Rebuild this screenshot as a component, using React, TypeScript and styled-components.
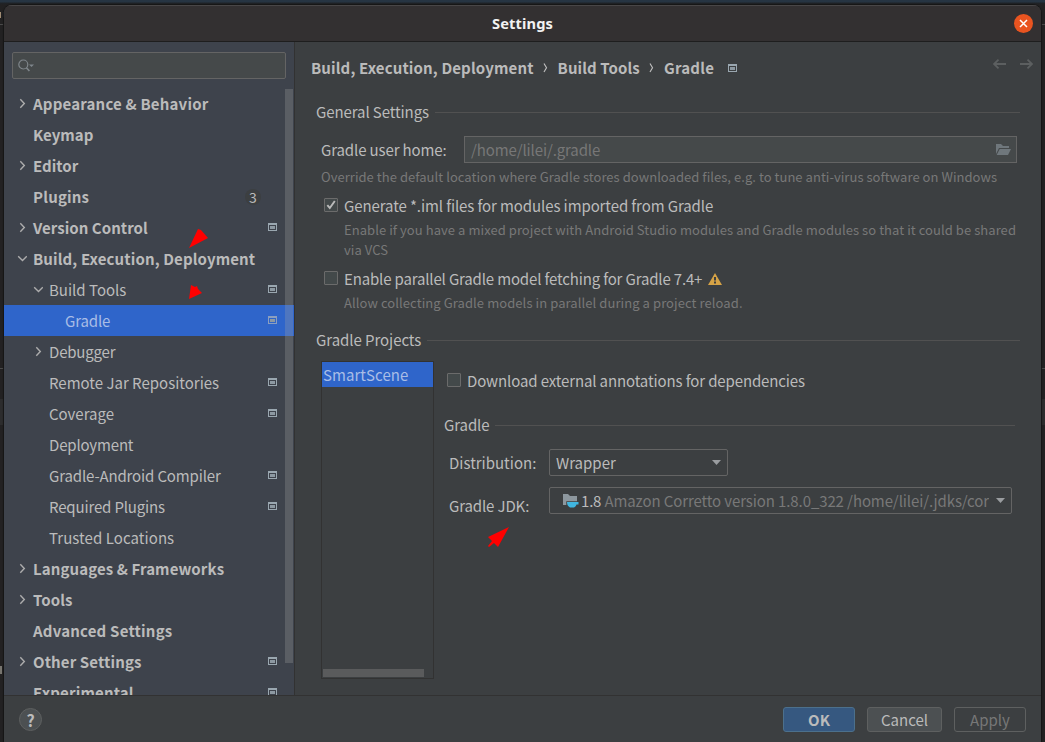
import React from "react";
import styled, { createGlobalStyle } from "styled-components";

const Global = createGlobalStyle`
  * { box-sizing: border-box; }
  html, body { margin: 0; height: 742px; overflow: hidden; background: #222122; }
  body { font-family: "Noto Sans CJK SC", sans-serif; font-size: 15px; line-height: 24px; color: #bbbbbb; }
  svg { display: block; flex: none; }
`;

const Desktop = styled.div`
  position: relative;
  width: 1045px; height: 742px; overflow: hidden;
  padding: 5px 4px 0 4px;
  background: linear-gradient(#263442 0 2px, #1f2327 3px, #222122 5px);
`;
const Backdrop = styled.svg` position: absolute; left: 0; top: 0; `;
const Dialog = styled.div`
  position: relative;
  display: flex; flex-direction: column;
  height: 737px; border-radius: 8px 8px 0 0; overflow: hidden;
  background: #3c3f41;
  box-shadow: 0 0 1px 1px #161616;
`;
const TitleBar = styled.header`
  display: grid; grid-template-columns: 40px 1fr 40px; align-items: center;
  height: 37px; flex: none; background: #333031;
  border-top: 1px solid #484647; border-bottom: 1px solid #1e1e1e;
`;
const Title = styled.h1`
  grid-column: 2; margin: -2px 0 0; text-align: center;
  font: 700 14.67px/24px "Noto Sans", sans-serif; letter-spacing: 0.12px; color: #f2f2f2;
`;
const CloseButton = styled.button`
  width: 19px; height: 19px; padding: 0; border: 0; border-radius: 50%;
  margin: -1px 0 0 12.5px; background: #e95420;
`;
const Body = styled.div`
  display: flex; height: 653px; flex: none;
`;
const Sidebar = styled.aside`
  position: relative;
  width: 291px; flex: none; background: #3e434c; border-right: 1px solid #323232;
  padding-top: 10px; overflow: hidden;
`;
const Search = styled.div`
  display: flex; align-items: center;
  width: 274px; height: 27px; margin: 0 0 9px 8px; padding-left: 5px;
  background: #45494a; border: 1px solid #646464; border-radius: 2px;
`;
const Tree = styled.ul` margin: 0; padding: 0; list-style: none; `;
const TreeRow = styled.li<{ $level: number; $selected?: boolean }>`
  display: flex; align-items: center; height: 31px;
  padding: 0 17px 0 ${p => 13 + p.$level * 16}px;
  background: ${p => (p.$selected ? "#2f65ca" : "transparent")};
  color: ${p => (p.$selected ? "#a9bde6" : "#bbbbbb")};
  font-weight: ${p => (p.$level === 0 ? 700 : 400)};
`;
const TreeLabel = styled.span<{ $track: number }>`
  flex: 1; padding-left: 6px; white-space: nowrap; letter-spacing: ${p => p.$track}px;
`;
const Text = styled.span<{ $track: number }>` letter-spacing: ${p => p.$track}px; `;
const Twisty = styled.span` width: 10px; display: flex; justify-content: center; `;
const RowIcon = styled.span` margin-bottom: 1px; `;
const Count = styled.span`
  width: 16px; height: 16px; margin-right: 16px; border-radius: 8px; background: #3c3f41;
  font-weight: 400; font-size: 14px; line-height: 17px; text-align: center;
`;
const ScrollThumb = styled.div`
  position: absolute; left: 281px; top: 47px; width: 8px; height: 574px;
  background: rgba(166, 166, 166, 0.28);
`;
const Main = styled.main` flex: 1; padding: 14px 21px 0 16px; min-width: 0; `;
const Breadcrumb = styled.nav`
  display: flex; align-items: center; height: 24px; font-weight: 700; margin-right: -13px;
`;
const CrumbSep = styled.span` width: 24px; display: flex; justify-content: center; `;
const CrumbIcon = styled.span` margin-left: 14px; `;
const History = styled.span` display: flex; gap: 14px; margin: -8px 0 0 auto; `;
const GroupTitle = styled.div<{ $top: number; $track: number }>`
  display: flex; align-items: center; height: 24px; margin-top: ${p => p.$top}px;
  padding-top: 2px; white-space: nowrap; letter-spacing: ${p => p.$track}px;
  &::after { content: ""; flex: 1; height: 1px; margin: 1px 0 0 6px; background: #515151; }
`;
const Groups = styled.div` padding-left: 5px; `;
const Field = styled.div`
  display: flex; align-items: center; margin: 13px 3px 0 5px; height: 27px;
`;
const FieldLabel = styled.label<{ $width: number; $shift?: number; $track: number }>`
  width: ${p => p.$width}px; flex: none; padding-top: ${p => p.$shift ?? 0}px;
  letter-spacing: ${p => p.$track}px;
`;
const PathBox = styled.div`
  flex: 1; display: flex; align-items: center; justify-content: space-between;
  height: 27px; padding: 0 5px 0 6px; border: 1px solid #646464; background: #45494a; color: #777777;
`;
const Caption = styled.p<{ $top: number; $indent: number; $track: number }>`
  margin: ${p => p.$top}px 0 0 ${p => p.$indent}px;
  font-size: 13px; line-height: 20px; letter-spacing: ${p => p.$track}px; color: #787878; white-space: nowrap;
`;
const Check = styled.label<{ $top: number; $indent: number; $track: number }>`
  display: flex; align-items: center; height: 24px; padding-top: 2px;
  margin: ${p => p.$top}px 0 0 ${p => p.$indent}px; white-space: nowrap;
  letter-spacing: ${p => p.$track}px;
`;
const Box = styled.span`
  width: 14px; height: 14px; margin: -3px 6px 0 0; flex: none;
  border: 1px solid #6b6b6b; border-radius: 1px; background: #43494a;
`;
const WarningIcon = styled.svg` margin-left: 6px; `;
const Projects = styled.div` display: flex; margin: 10px 0 0 5px; `;
const ProjectList = styled.div`
  display: flex; flex-direction: column; justify-content: space-between;
  width: 113px; height: 318px; flex: none; border: 1px solid #323232;
`;
const Project = styled.div`
  height: 25px; padding-left: 1px; line-height: 25px; letter-spacing: 0.06px;
  background: #2f65ca; color: #a9bde6;
`;
const HThumb = styled.div` width: 101px; height: 8px; margin: 0 0 1px 1px; background: #5a5b5c; `;
const ProjectForm = styled.div` flex: 1; min-width: 0; padding: 0 5px 0 10px; `;
const SettingRow = styled.div<{ $top: number }>`
  display: flex; align-items: center; height: 27px; margin: ${p => p.$top}px 3px 0 5px;
`;
const Select = styled.div<{ $width: number; $pad: number }>`
  display: flex; align-items: center; width: ${p => p.$width}px; height: 27px;
  padding: 0 6px 0 ${p => p.$pad}px; border: 1px solid #646464; border-radius: 2px;
`;
const SelectText = styled.span` flex: 1; margin-right: 7px; overflow: hidden; white-space: nowrap; `;
const JdkIcon = styled.svg` margin-right: 2px; `;
const Version = styled.span` letter-spacing: -0.2px; `;
const Muted = styled.span` color: #787878; letter-spacing: -0.1px; `;
const Footer = styled.footer`
  display: flex; align-items: flex-start; gap: 12px; flex: 1;
  padding: 11px 15px 0; border-top: 1px solid #323232;
`;
const Help = styled.button`
  width: 23px; height: 23px; margin: 1px auto 0 0; padding: 0; border-radius: 50%;
  border: 1px solid #5e6060; background: #4c5052; color: #bbbbbb;
  font: 700 16px/20px "Noto Sans CJK SC", sans-serif;
`;
const Button = styled.button<{ $width: number; $kind: "primary" | "normal" | "disabled" }>`
  width: ${p => p.$width}px; height: 25px; padding: 0; border-radius: 3px;
  font: ${p => (p.$kind === "primary" ? 700 : 400)} 15px/24px "Noto Sans CJK SC", sans-serif;
  border: 1px solid ${p => (p.$kind === "primary" ? "#4c708c" : "#5e6060")};
  background: ${p => ({ primary: "#365880", normal: "#4c5052", disabled: "transparent" })[p.$kind]};
  color: ${p => (p.$kind === "disabled" ? "#777777" : "#bbbbbb")};
`;
const Marks = styled.svg` position: absolute; left: 0; top: 0; pointer-events: none; `;

const Chevron = ({ open }: { open?: boolean }) => (
  <svg width="10" height="11" viewBox="0 0 10 11" fill="none" stroke="#adadad" strokeWidth="1.4">
    <path d={open ? "M1.2 3.3 5.5 7.6 9.8 3.3" : "M3.3 1.3 7.3 5.5 3.3 9.7"} />
  </svg>
);
const ProjectIcon = ({ color = "#9aa7b0", inner = "#8d99a2" }) => (
  <svg width="9" height="8" viewBox="0 0 9 8">
    <path d="M0 0h9v8H0zM1 2v5h7V2z" fill={color} fillRule="evenodd" />
    <path d="M2 3h5v3H2z" fill={inner} />
  </svg>
);
const Arrow = ({ flip }: { flip?: boolean }) => (
  <svg width="13" height="10" viewBox="0 0 13 10" fill="none" stroke="#5c5f60" strokeWidth="1.8">
    <path d={flip ? "M0 5h12M7.5 .7 12 5 7.5 9.3" : "M13 5H1M5.5 .7 1 5l4.5 4.3"} />
  </svg>
);
const Caret = () => (
  <svg width="9" height="5" viewBox="0 0 9 5"><path d="M0 0h9L4.5 5z" fill="#9a9da0" /></svg>
);
const Separator = () => (
  <CrumbSep>
    <svg width="5" height="10" viewBox="0 0 5 10" fill="none" stroke="#bbb" strokeWidth="1.2">
      <path d="M1 .5 3.5 4.8 1 9" />
    </svg>
  </CrumbSep>
);

type Item = {
  label: string; track: number; level?: number; state?: "open" | "closed";
  icon?: boolean; count?: number; selected?: boolean;
};
const items: Item[] = [
  { label: "Appearance & Behavior", track: 0.19, state: "closed" },
  { label: "Keymap", track: 0 },
  { label: "Editor", track: 0, state: "closed" },
  { label: "Plugins", track: 0.2, count: 3 },
  { label: "Version Control", track: 0.04, state: "closed", icon: true },
  { label: "Build, Execution, Deployment", track: 0.13, state: "open" },
  { label: "Build Tools", track: 0, level: 1, state: "open", icon: true },
  { label: "Gradle", track: -0.15, level: 2, icon: true, selected: true },
  { label: "Debugger", track: -0.19, level: 1, state: "closed" },
  { label: "Remote Jar Repositories", track: 0, level: 1, icon: true },
  { label: "Coverage", track: 0, level: 1, icon: true },
  { label: "Deployment", track: -0.17, level: 1 },
  { label: "Gradle-Android Compiler", track: -0.14, level: 1, icon: true },
  { label: "Required Plugins", track: -0.16, level: 1, icon: true },
  { label: "Trusted Locations", track: 0.07, level: 1 },
  { label: "Languages & Frameworks", track: 0.1, state: "closed" },
  { label: "Tools", track: 0.1, state: "closed" },
  { label: "Advanced Settings", track: 0.2 },
  { label: "Other Settings", track: 0.12, state: "closed", icon: true },
  { label: "Experimental", track: 0.16, icon: true },
];

export default function App() {
  return (
    <Desktop>
      <Global />
      <Backdrop width="1045" height="742" viewBox="0 0 1045 742">
        <path d="M0 24h1045v1H0zM0 368h1045v1H0z" fill="#4a4a4a" />
        <path d="M0 399h1045v26H0z" fill="#2c2c2d" />
        <path d="M0 12h1v6H0z" fill="#a08c74" />
        <path d="M3 12h1v5H3z" fill="#46618a" />
        <path d="M0 666h2v8H0z" fill="#77756f" />
      </Backdrop>
      <Dialog>
        <TitleBar>
          <Title>Settings</Title>
          <CloseButton aria-label="Close">
            <svg width="19" height="19" viewBox="0 0 19 19" stroke="#fff" strokeWidth="1.5">
              <path d="M6 6l7 7M13 6l-7 7" />
            </svg>
          </CloseButton>
        </TitleBar>
        <Body>
          <Sidebar>
            <Search>
              <svg width="17" height="14" viewBox="0 0 17 14" fill="none" stroke="#7f868b" strokeWidth="1.2">
                <circle cx="5.3" cy="5.5" r="4.5" />
                <path d="M8.4 8.7 11.4 12" strokeWidth="1.6" />
                <path d="M11 5.5h5L13.5 8z" fill="#7f868b" stroke="none" />
              </svg>
            </Search>
            <Tree>
              {items.map(it => (
                <TreeRow key={it.label} $level={it.level ?? 0} $selected={it.selected}>
                  <Twisty>{it.state && <Chevron open={it.state === "open"} />}</Twisty>
                  <TreeLabel $track={it.track}>{it.label}</TreeLabel>
                  {it.count && <Count>{it.count}</Count>}
                  {it.icon && <RowIcon><ProjectIcon color={it.selected ? "#8b9fc0" : undefined} /></RowIcon>}
                </TreeRow>
              ))}
            </Tree>
            <ScrollThumb />
          </Sidebar>
          <Main>
            <Breadcrumb>
              <Text $track={0.14}>Build, Execution, Deployment</Text>
              <Separator />
              <Text $track={0.1}>Build Tools</Text>
              <Separator />
              <Text $track={0.25}>Gradle</Text>
              <CrumbIcon><ProjectIcon /></CrumbIcon>
              <History><Arrow /><Arrow flip /></History>
            </Breadcrumb>
            <Groups>
              <GroupTitle $top={19} $track={-0.09}>General Settings</GroupTitle>
              <Field>
                <FieldLabel $width={143} $track={-0.12}>Gradle user home:</FieldLabel>
                <PathBox>
                  <Text $track={-0.12}>/home/lilei/.gradle</Text>
                  <svg width="15" height="12" viewBox="0 0 15 12" fill="#6f777c">
                    <path d="M0 0h5l2 2h6v2H3L0 10z" /><path d="M3.7 5H15l-3 6H.7z" />
                  </svg>
                </PathBox>
              </Field>
              <Caption $top={4} $indent={5} $track={0.045}>Override the default location where Gradle stores downloaded files, e.g. to tune anti-virus software on Windows</Caption>
              <Check $top={6} $indent={8} $track={-0.1}>
                <Box>
                  <svg width="12" height="12" viewBox="0 0 12 12" fill="none" stroke="#bbbbbb" strokeWidth="1.9">
                    <path d="M2.3 6.2 4.8 9 9.8 2" />
                  </svg>
                </Box>
                Generate *.iml files for modules imported from Gradle
              </Check>
              <Caption $top={3} $indent={28} $track={0.06}>
                Enable if you have a mixed project with Android Studio modules and Gradle modules so that it could be shared<br />via VCS
              </Caption>
              <Check $top={6} $indent={8} $track={-0.16}>
                <Box />
                Enable parallel Gradle model fetching for Gradle 7.4+
                <WarningIcon width="14" height="12" viewBox="0 0 14 12">
                  <path d="M7 0 14 12H0z" fill="#d6a346" /><path d="M6 4h2v3.5H6zM6 8.6h2v1.9H6z" fill="#3c3f41" />
                </WarningIcon>
              </Check>
              <Caption $top={3} $indent={28} $track={0.08}>Allow collecting Gradle models in parallel during a project reload.</Caption>
              <GroupTitle $top={14} $track={-0.06}>Gradle Projects</GroupTitle>
              <Projects>
                <ProjectList><Project>SmartScene</Project><HThumb /></ProjectList>
                <ProjectForm>
                  <Check $top={7} $indent={3} $track={-0.12}><Box />Download external annotations for dependencies</Check>
                  <GroupTitle $top={20} $track={-0.1}>Gradle</GroupTitle>
                  <SettingRow $top={13}>
                    <FieldLabel $width={100} $track={0}>Distribution:</FieldLabel>
                    <Select $width={179} $pad={6}><SelectText>Wrapper</SelectText><Caret /></Select>
                  </SettingRow>
                  <SettingRow $top={11}>
                    <FieldLabel $width={100} $shift={10} $track={-0.13}>Gradle JDK:</FieldLabel>
                    <Select $width={463} $pad={13}>
                      <JdkIcon width="16" height="15" viewBox="0 0 16 15">
                        <path d="M0 1h5l2 2h7v5.2H3.3V12H0z" fill="#8d979e" />
                        <path d="M4 9h11.5v2.5h-2c-.5 1.7-1.500 2.5-2.500 3H7C5.2 13.3 4 12 4 9z" fill="#40b6e0" />
                      </JdkIcon>
                      <SelectText>
                        <Version>1.8 </Version>
                        <Muted>Amazon Corretto version 1.8.0_322 /home/lilei/.jdks/cor</Muted>
                      </SelectText>
                      <Caret />
                    </Select>
                  </SettingRow>
                </ProjectForm>
              </Projects>
            </Groups>
          </Main>
        </Body>
        <Footer>
          <Help>?</Help>
          <Button $width={72} $kind="primary">OK</Button>
          <Button $width={75} $kind="normal">Cancel</Button>
          <Button $width={72} $kind="disabled">Apply</Button>
        </Footer>
      </Dialog>
      <Marks width="1045" height="742" viewBox="0 0 1045 742" fill="#ff0000">
        <path d="M189 248 198 229l3 1 7 8z" />
        <path d="M191 285l4 2 2-1 1 3 4 4-13 6z" />
        <path d="M509 527 498 547l-4-4-5 4-1-1 4-5-4-4z" />
      </Marks>
    </Desktop>
  );
}
